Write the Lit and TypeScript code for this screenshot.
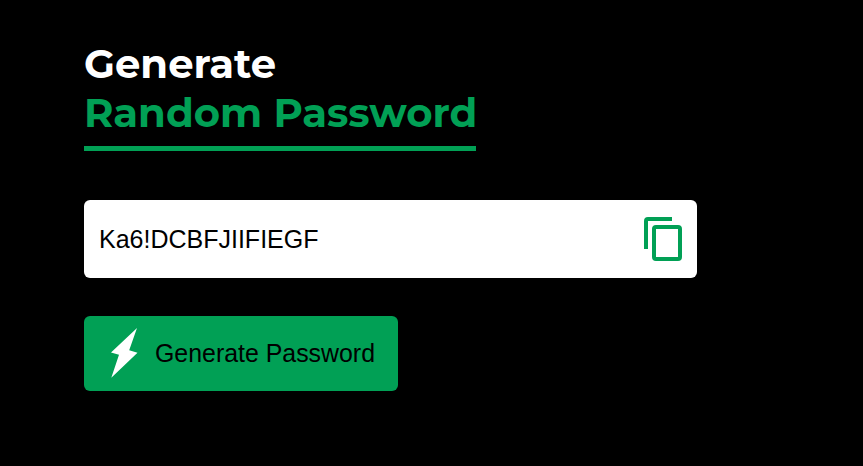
import { LitElement, html, css } from "lit";
import { customElement, state } from "lit/decorators.js";

@customElement("app-root")
export class AppRoot extends LitElement {
  static styles = css`
    :host {
      display: block;
      box-sizing: border-box;
      height: 466px;
      padding: 39px 0 0 84px;
      background: #000;
      font-family: "Liberation Sans", Arial, sans-serif;
      overflow: hidden;
    }
    h1 {
      margin: 0;
      font: 700 40.15px/49px Montserrat, Inter, sans-serif;
      color: #fff;
      white-space: nowrap;
    }
    .first { display: block; }
    .accent {
      display: block;
      box-sizing: border-box;
      width: 392px;
      height: 63px;
      color: #01a055;
      border-bottom: 5px solid #01a055;
    }
    .display {
      display: flex;
      align-items: center;
      justify-content: space-between;
      box-sizing: border-box;
      width: 613px;
      height: 78px;
      margin-top: 49px;
      padding: 0 14px 0 15px;
      border-radius: 6px;
      background: #fff;
      color: #000;
      font-size: 25px;
    }
    .copy { display: block; width: 40px; height: 46px; }
    button {
      display: flex;
      align-items: center;
      box-sizing: border-box;
      width: 314px;
      height: 75px;
      margin: 38px 0 0;
      padding: 0 0 0 26px;
      gap: 17px;
      border: 0;
      border-radius: 6px;
      background: #01a055;
      color: #000;
      font: 24.9px "Liberation Sans", Arial, sans-serif;
      white-space: nowrap;
    }
    .bolt { display: block; width: 28px; height: 52px; flex: none; }
  `;

  @state() private password = "Ka6!DCBFJIIFIEGF";

  render() {
    return html`
      <h1>
        <span class="first">Generate</span>
        <span class="accent">Random Password</span>
      </h1>
      <div class="display">
        <span>${this.password}</span>
        <svg class="copy" viewBox="0 0 40 46" fill="none" stroke="#01a055" stroke-width="4">
          <path d="M3 33V5Q3 3 5 3H29" />
          <rect x="11" y="11" width="26" height="32" rx="2" />
        </svg>
      </div>
      <button>
        <svg class="bolt" viewBox="0 0 28 52" fill="#fff">
          <path d="M27 0L1 24.5L9 26.8L1.3 49.8L27.5 24.8L19.2 22.3Z" />
        </svg>
        <span>Generate Password</span>
      </button>
    `;
  }
}
